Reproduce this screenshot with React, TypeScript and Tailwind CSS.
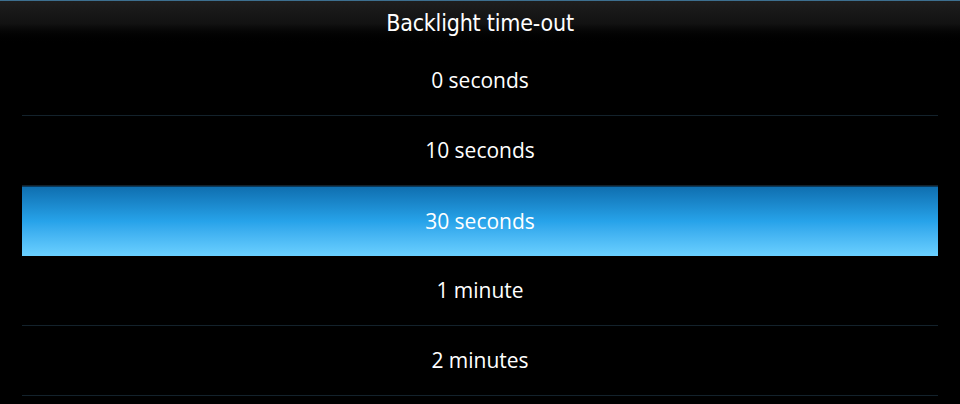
const options = ["0 seconds", "10 seconds", "30 seconds", "1 minute", "2 minutes"]
const selected = "30 seconds"

export default function App() {
  return (
    <div
      className="w-[960px] h-[404px] bg-black text-white overflow-hidden"
      style={{ fontFamily: '"Open Sans", "Noto Sans", sans-serif' }}
    >
      {/* Title bar */}
      <div className="h-[46px] border-t border-[#3d6f8f] bg-gradient-to-b from-[#1e1e1e] via-[#121212] to-black flex items-center justify-center">
        <h1
          className="text-[23px] leading-none tracking-[-0.2px]"
          style={{ fontFamily: '"DejaVu Sans Condensed", "DejaVu Sans", sans-serif' }}
        >
          Backlight time-out
        </h1>
      </div>

      {/* Options list */}
      <ul className="mx-[22px] flex flex-col">
        {options.map((opt) => {
          const active = opt === selected
          return (
            <li
              key={opt}
              className={
                active
                  ? "h-[70px] flex items-center justify-center border-t border-[#0b3a5c] bg-gradient-to-b from-[#0f6fb0] via-[#27a3ea] to-[#6ad0ff] text-[21px]"
                  : "h-[70px] flex items-center justify-center border-b border-[#13222c] text-[21px]"
              }
            >
              <span className="pt-[1px]">{opt}</span>
            </li>
          )
        })}
      </ul>
    </div>
  )
}
